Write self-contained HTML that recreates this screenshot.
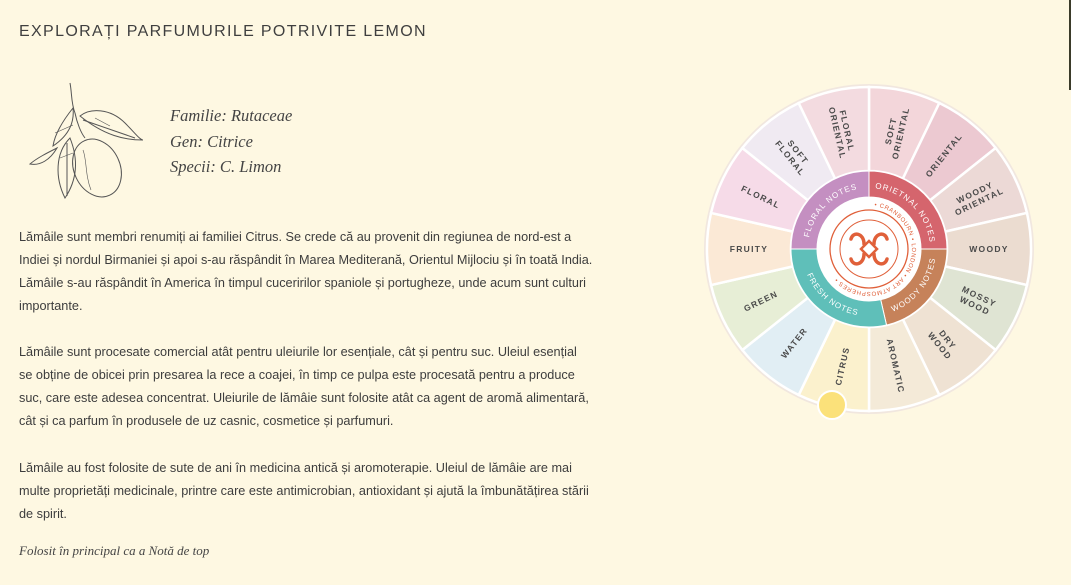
<!DOCTYPE html>
<html><head><meta charset="utf-8"><style>
html,body{margin:0;padding:0}
body{width:1071px;height:585px;background:#fef8e2;position:relative;overflow:hidden;font-family:"Liberation Sans",Arial,sans-serif;color:#444}
h1{position:absolute;left:19px;top:23px;margin:0;font-weight:normal;font-size:16px;letter-spacing:1.35px;color:#3f3f3f;white-space:nowrap}
.sp{position:absolute;left:170px;font-family:"Liberation Serif",serif;font-style:italic;font-size:16.5px;color:#444}
.p{position:absolute;left:19px;font-size:12.7px;line-height:23px;color:#3d3d3d;white-space:nowrap}
.ft{position:absolute;left:19px;top:543px;font-family:"Liberation Serif",serif;font-style:italic;font-size:13px;color:#444}
.bar{position:absolute;left:1069px;top:0;width:2px;height:90px;background:#3b3b2a}
svg text{font-family:"Liberation Sans",Arial,sans-serif}
</style></head><body>
<div class="bar"></div>
<h1>EXPLORAȚI PARFUMURILE POTRIVITE LEMON</h1>

<svg style="position:absolute;left:25px;top:78px" width="120" height="125" viewBox="0 0 120 125" fill="none" stroke="#555" stroke-width="1">
<path d="M45 5 C47 15 46 25 50 35 C52 45 56 55 60 60"/>
<path d="M48 30 C40 40 30 55 28 68 C40 60 50 48 48 30 Z"/>
<path d="M55 38 C65 30 85 30 100 45 C110 55 115 62 118 62 C100 62 80 58 55 38 Z"/>
<path d="M58 42 L110 60"/>
<path d="M45 60 C30 75 30 100 40 120 C50 105 55 85 45 60 Z"/>
<path d="M42 65 L42 118"/>
<path d="M32 70 C22 75 12 80 5 86 C15 88 25 82 32 70 Z"/>
<ellipse cx="72" cy="90" rx="23" ry="30" transform="rotate(-25 72 90)"/>
<path d="M58 72 C62 82 60 97 66 112" stroke-width="0.6"/>
<path d="M30 55 L48 47 M35 80 L48 75 M70 40 L85 48" stroke-width="0.6"/>
</svg>

<div class="sp" style="top:106px">Familie: Rutaceae</div>
<div class="sp" style="top:132px">Gen: Citrice</div>
<div class="sp" style="top:157px">Specii: C. Limon</div>

<div class="p" style="top:226px">Lămâile sunt membri renumiți ai familiei Citrus. Se crede că au provenit din regiunea de nord-est a<br>Indiei și nordul Birmaniei și apoi s-au răspândit în Marea Mediterană, Orientul Mijlociu și în toată India.<br>Lămâile s-au răspândit în America în timpul cuceririlor spaniole și portugheze, unde acum sunt culturi<br>importante.</div>
<div class="p" style="top:341px">Lămâile sunt procesate comercial atât pentru uleiurile lor esențiale, cât și pentru suc. Uleiul esențial<br>se obține de obicei prin presarea la rece a coajei, în timp ce pulpa este procesată pentru a produce<br>suc, care este adesea concentrat. Uleiurile de lămâie sunt folosite atât ca agent de aromă alimentară,<br>cât și ca parfum în produsele de uz casnic, cosmetice și parfumuri.</div>
<div class="p" style="top:457px">Lămâile au fost folosite de sute de ani în medicina antică și aromoterapie. Uleiul de lămâie are mai<br>multe proprietăți medicinale, printre care este antimicrobian, antioxidant și ajută la îmbunătățirea stării<br>de spirit.</div>
<div class="ft">Folosit în principal ca a Notă de top</div>

<svg style="position:absolute;left:0;top:0" width="1071" height="585">
<defs>
<path id="w" d="M76.05,-17.36 L157.94,-36.05 A162,162 0 0 1 157.94,36.05 L76.05,17.36 A78,78 0 0 0 76.05,-17.36 Z"/>
<path id="pf" d="M-61,0 A61 61 0 0 1 0,-61"/>
<path id="po" d="M0,-61 A61 61 0 0 1 61,0"/>
<path id="pw" d="M15.1,65.3 A67 67 0 0 0 67,0"/>
<path id="pr" d="M-67,0 A67 67 0 0 0 15.1,65.3"/>
<path id="pc" d="M0,-43 A43 43 0 1 1 -0.1,-43"/>
</defs>
<g transform="translate(869,249)">
<circle r="165" fill="#f1e7df"/>
<g stroke="#fff" stroke-width="2.5" font-size="8.5" font-weight="bold" fill="#4a4a4a" letter-spacing="1.3">
<g transform="rotate(-77.14)"><use href="#w" fill="#f3d6da"/><g stroke="none"><text x="120" y="-2" text-anchor="middle">SOFT</text><text x="120" y="8" text-anchor="middle">ORIENTAL</text></g></g>
<g transform="rotate(-51.43)"><use href="#w" fill="#ecc9d1"/><text stroke="none" x="120" y="3" text-anchor="middle">ORIENTAL</text></g>
<g transform="rotate(-25.71)"><use href="#w" fill="#ecd9d6"/><g stroke="none"><text x="120" y="-2" text-anchor="middle">WOODY</text><text x="120" y="8" text-anchor="middle">ORIENTAL</text></g></g>
<g transform="rotate(0)"><use href="#w" fill="#ebdcd0"/><text stroke="none" x="120" y="3" text-anchor="middle">WOODY</text></g>
<g transform="rotate(25.71)"><use href="#w" fill="#dfe4d3"/><g stroke="none"><text x="120" y="-2" text-anchor="middle">MOSSY</text><text x="120" y="8" text-anchor="middle">WOOD</text></g></g>
<g transform="rotate(51.43)"><use href="#w" fill="#efe2d3"/><g stroke="none"><text x="120" y="-2" text-anchor="middle">DRY</text><text x="120" y="8" text-anchor="middle">WOOD</text></g></g>
<g transform="rotate(77.14)"><use href="#w" fill="#f4ead8"/><text stroke="none" x="120" y="3" text-anchor="middle">AROMATIC</text></g>
<g transform="rotate(102.86)"><use href="#w" fill="#fbf1cd"/><text stroke="none" x="120" y="3" text-anchor="middle" transform="rotate(180 120 0)">CITRUS</text></g>
<g transform="rotate(128.57)"><use href="#w" fill="#e1eef4"/><text stroke="none" x="120" y="3" text-anchor="middle" transform="rotate(180 120 0)">WATER</text></g>
<g transform="rotate(154.29)"><use href="#w" fill="#e7eed6"/><text stroke="none" x="120" y="3" text-anchor="middle" transform="rotate(180 120 0)">GREEN</text></g>
<g transform="rotate(180)"><use href="#w" fill="#fbe9d6"/><text stroke="none" x="120" y="3" text-anchor="middle" transform="rotate(180 120 0)">FRUITY</text></g>
<g transform="rotate(205.71)"><use href="#w" fill="#f6dbe8"/><text stroke="none" x="120" y="3" text-anchor="middle" transform="rotate(180 120 0)">FLORAL</text></g>
<g transform="rotate(231.43)"><use href="#w" fill="#f0eaf2"/><g stroke="none" transform="rotate(180 120 0)"><text x="120" y="-2" text-anchor="middle">SOFT</text><text x="120" y="8" text-anchor="middle">FLORAL</text></g></g>
<g transform="rotate(257.14)"><use href="#w" fill="#f3dbe0"/><g stroke="none" transform="rotate(180 120 0)"><text x="120" y="-2" text-anchor="middle">FLORAL</text><text x="120" y="8" text-anchor="middle">ORIENTAL</text></g></g>
</g>
<g stroke="#fff" stroke-width="1">
<path d="M-78,0 A78 78 0 0 1 0,-78 L0,-52 A52 52 0 0 0 -52,0Z" fill="#c48fc1"/>
<path d="M0,-78 A78 78 0 0 1 78,0 L52,0 A52 52 0 0 0 0,-52Z" fill="#d5656d"/>
<path d="M78,0 A78 78 0 0 1 17.5,76 L11.7,50.7 A52 52 0 0 0 52,0Z" fill="#c6825a"/>
<path d="M17.5,76 A78 78 0 0 1 -78,0 L-52,0 A52 52 0 0 0 11.7,50.7Z" fill="#5fbfb9"/>
</g>
<g fill="#fff" font-size="8" letter-spacing="1">
<text><textPath href="#pf" startOffset="50%" text-anchor="middle">FLORAL NOTES</textPath></text>
<text><textPath href="#po" startOffset="50%" text-anchor="middle">ORIETNAL NOTES</textPath></text>
<text><textPath href="#pw" startOffset="50%" text-anchor="middle">WOODY NOTES</textPath></text>
<text><textPath href="#pr" startOffset="50%" text-anchor="middle">FRESH NOTES</textPath></text>
</g>
<circle r="52" fill="#fff"/>
<circle r="39" fill="none" stroke="#e0603a" stroke-width="1.3"/>
<circle r="29" fill="none" stroke="#e0603a" stroke-width="1"/>
<text font-size="6" fill="#e0603a" letter-spacing="0.6"><textPath href="#pc" startOffset="2%">• CRANBOURN • LONDON • ART ATMOSPHERES •</textPath></text>
<g fill="none" stroke="#e0603a" stroke-width="3.5" stroke-linecap="round">
<path d="M-5,-5 C-5,-16 -16,-18 -18,-10"/>
<path d="M5,-5 C5,-16 16,-18 18,-10"/>
<path d="M-5,5 C-5,16 -16,18 -18,10"/>
<path d="M5,5 C5,16 16,18 18,10"/>
</g>
<path d="M0,-8 L8,0 L0,8 L-8,0Z" fill="none" stroke="#e0603a" stroke-width="2.5"/>
</g>
<circle cx="832" cy="405" r="14" fill="#fbe17a" stroke="#fff" stroke-width="2"/>
</svg>
</body></html>
